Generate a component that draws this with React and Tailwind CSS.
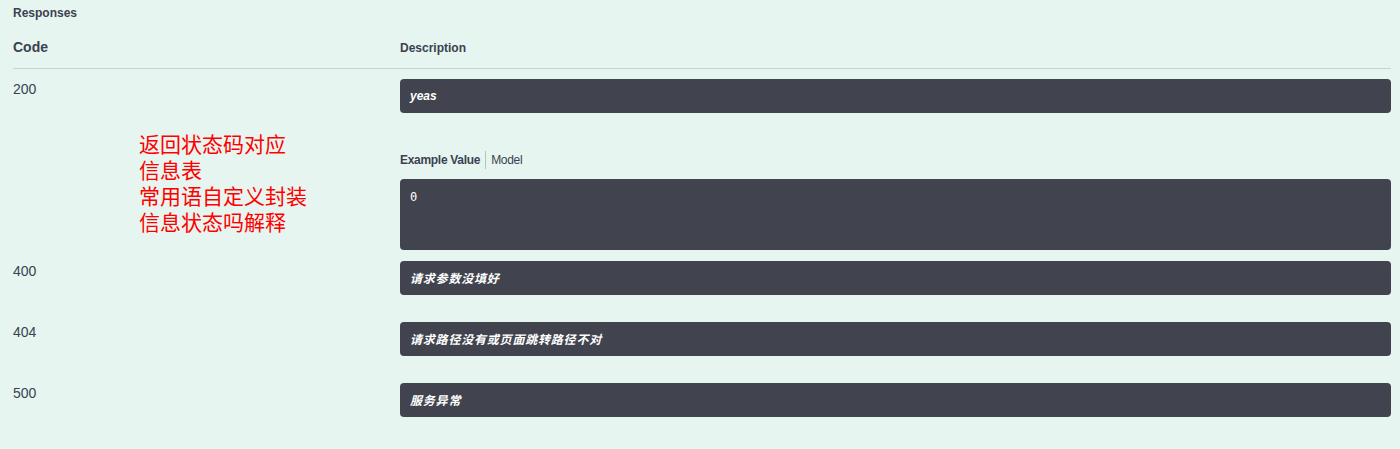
export default function App() {
  const rows = [
    { code: "400", desc: "请求参数没填好" },
    { code: "404", desc: "请求路径没有或页面跳转路径不对" },
    { code: "500", desc: "服务异常" },
  ];
  const box =
    "h-[34px] rounded-[4px] bg-[#41444e] flex items-center px-[10px] text-white text-[12px] italic";
  return (
    <div
      className="min-h-[449px] bg-[#e6f5ef] pl-[13px] pr-[9px] text-[#3b4151]"
      style={{ fontFamily: '"Liberation Sans", "Noto Sans CJK SC", sans-serif' }}
    >
      <div className="h-[25px] flex items-center text-[12px] font-bold">Responses</div>
      <div className="h-[44px] flex items-center pt-[2px] border-b border-[#c6d3ce]">
        <div className="w-[387px] text-[14px] font-bold">Code</div>
        <div className="text-[12px] font-bold">Description</div>
      </div>
      <div className="flex pt-[10px] pb-[1px]">
        <div className="w-[387px] shrink-0">
          <div className="text-[14px] leading-[20px]">200</div>
          <div
            className="mt-[31px] ml-[126px] text-[21px] leading-[26px] text-[#ff0000]"
            style={{ fontFamily: '"Noto Sans CJK SC", sans-serif' }}
          >
            <div className="h-[26px]">返回状态码对应</div>
            <div className="h-[26px]">信息表</div>
            <div className="h-[26px]">常用语自定义封装</div>
            <div className="h-[26px]">信息状态吗解释</div>
          </div>
        </div>
        <div className="flex-1">
          <div className={box + " font-semibold"}>yeas</div>
          <div className="mt-[39px] h-[16px] flex items-center text-[12px]">
            <span className="font-semibold tracking-[-0.3px]">Example Value</span>
            <span className="mx-[5px] w-px h-[18px] bg-[#b8c4c0]"></span>
            <span className="tracking-[-0.3px]">Model</span>
          </div>
          <div
            className="mt-[11px] h-[71px] rounded-[4px] bg-[#41444e] px-[10px] pt-[10px] text-white text-[12px] leading-[16px]"
            style={{ fontFamily: '"DejaVu Sans Mono", monospace' }}
          >
            0
          </div>
        </div>
      </div>
      {rows.map((r) => (
        <div key={r.code} className="flex pt-[10px] pb-[17px]">
          <div className="w-[387px] shrink-0 text-[14px] leading-[20px]">{r.code}</div>
          <div className="flex-1">
            <div
              className={box + " font-bold tracking-[0.8px]"}
              style={{ fontFamily: '"Noto Sans CJK SC", sans-serif' }}
            >
              {r.desc}
            </div>
          </div>
        </div>
      ))}
    </div>
  );
}
